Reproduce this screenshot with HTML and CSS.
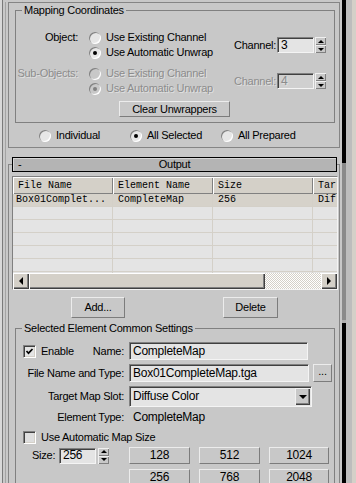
FILE: index.html
```html
<!DOCTYPE html>
<html lang="en">

<head>
    <meta charset="UTF-8">
    <title>Render To Texture</title>
    <link rel="stylesheet" href="styles.css">
</head>

<body>
    <div class="window">
        <div class="edge"></div>
        <div class="panel">
            <div class="panel-inner">

                <!-- Mapping Coordinates rollout -->
                <div class="rollout">
                    <fieldset class="group">
                        <legend>Mapping Coordinates</legend>
                        <div class="coord-block">
                            <div class="coord-label">Object:</div>
                            <div class="radio-stack">
                                <div class="opt"><span class="radio"></span>Use Existing Channel</div>
                                <div class="opt"><span class="radio on"></span>Use Automatic Unwrap</div>
                            </div>
                            <div class="channel">
                                <span class="channel-label">Channel:</span>
                                <span class="field num">3</span>
                                <span class="spinner"><span class="spin-up"></span><span class="spin-down"></span></span>
                            </div>
                        </div>
                        <div class="coord-block disabled">
                            <div class="coord-label">Sub-Objects:</div>
                            <div class="radio-stack">
                                <div class="opt"><span class="radio"></span>Use Existing Channel</div>
                                <div class="opt"><span class="radio on"></span>Use Automatic Unwrap</div>
                            </div>
                            <div class="channel">
                                <span class="channel-label">Channel:</span>
                                <span class="field num">4</span>
                                <span class="spinner"><span class="spin-up"></span><span class="spin-down"></span></span>
                            </div>
                        </div>
                        <div class="btn clear-btn">Clear Unwrappers</div>
                    </fieldset>
                    <div class="scope-row">
                        <div class="opt scope"><span class="radio"></span>Individual</div>
                        <div class="opt scope"><span class="radio on"></span>All Selected</div>
                        <div class="opt scope"><span class="radio"></span>All Prepared</div>
                    </div>
                </div>

                <!-- Output rollout -->
                <div class="rollout output">
                    <div class="rollout-head">
                        <span class="head-sign">-</span>
                        <span class="head-title">Output</span>
                        <span></span>
                    </div>

                    <div class="list">
                        <div class="list-head">
                            <div class="col-head">File Name</div>
                            <div class="col-head">Element Name</div>
                            <div class="col-head">Size</div>
                            <div class="col-head">Tar</div>
                        </div>
                        <div class="list-body">
                            <div class="list-row current">
                                <div class="cell first">Box01Complet...</div>
                                <div class="cell">CompleteMap</div>
                                <div class="cell">256</div>
                                <div class="cell">Dif</div>
                            </div>
                            <div class="list-row"><div class="cell"></div><div class="cell"></div><div class="cell"></div><div class="cell"></div></div>
                            <div class="list-row"><div class="cell"></div><div class="cell"></div><div class="cell"></div><div class="cell"></div></div>
                            <div class="list-row"><div class="cell"></div><div class="cell"></div><div class="cell"></div><div class="cell"></div></div>
                            <div class="list-row"><div class="cell"></div><div class="cell"></div><div class="cell"></div><div class="cell"></div></div>
                            <div class="list-row"><div class="cell"></div><div class="cell"></div><div class="cell"></div><div class="cell"></div></div>
                            <div class="list-row"><div class="cell"></div><div class="cell"></div><div class="cell"></div><div class="cell"></div></div>
                        </div>
                        <div class="hscroll">
                            <div class="arrow-btn"><span class="tri-left"></span></div>
                            <div class="hthumb"></div>
                            <div class="htrack"></div>
                            <div class="arrow-btn"><span class="tri-right"></span></div>
                        </div>
                    </div>

                    <div class="list-actions">
                        <div class="btn add-btn">Add...</div>
                        <div class="btn delete-btn">Delete</div>
                    </div>

                    <fieldset class="group settings">
                        <legend>Selected Element Common Settings</legend>
                        <div class="set-row">
                            <div class="set-label enable-cell">
                                <span class="check-line">
                                    <span class="checkbox">
                                        <svg width="9" height="9" viewBox="0 0 9 9"><polyline points="1.5,4 3.5,6.2 7.5,2" fill="none" stroke="#000" stroke-width="1.7"/></svg>
                                    </span>Enable
                                </span>
                                <span>Name:</span>
                            </div>
                            <div class="field name-field">CompleteMap</div>
                        </div>
                        <div class="set-row">
                            <div class="set-label">File Name and Type:</div>
                            <div class="field file-field">Box01CompleteMap.tga</div>
                            <div class="btn browse-btn">...</div>
                        </div>
                        <div class="set-row">
                            <div class="set-label">Target Map Slot:</div>
                            <div class="field dropdown">Diffuse Color<span class="drop-btn"><span class="tri-down"></span></span></div>
                        </div>
                        <div class="set-row element-row">
                            <div class="set-label">Element Type:</div>
                            <div class="set-value">CompleteMap</div>
                        </div>
                        <div class="auto-row">
                            <span class="checkbox plain"></span>Use Automatic Map Size
                        </div>
                        <div class="size-row">
                            <div class="size-left">
                                <span class="size-label">Size:</span>
                                <span class="field num size-field">256</span>
                                <span class="spinner"><span class="spin-up"></span><span class="spin-down"></span></span>
                            </div>
                            <div class="size-grid">
                                <div class="btn">128</div>
                                <div class="btn">512</div>
                                <div class="btn">1024</div>
                                <div class="btn">256</div>
                                <div class="btn">768</div>
                                <div class="btn">2048</div>
                            </div>
                        </div>
                    </fieldset>
                </div>

            </div>
        </div>
        <div class="vscroll">
            <div class="vs-top"></div>
            <div class="vs-thumb"></div>
            <div class="vs-bottom"></div>
        </div>
        <div class="gutter"></div>
        <div class="edge-right"></div>
    </div>
</body>

</html>
```

FILE: styles.css
```css
* {
    box-sizing: border-box;
}

body {
    margin: 0;
    background-color: #c8c8c8;
    font-family: "Liberation Sans", Arial, sans-serif;
    font-size: 11px;
    line-height: 13px;
    letter-spacing: -0.25px;
    color: #000;
    overflow: hidden;
}

.window {
    display: flex;
    width: 356px;
    height: 483px;
    overflow: hidden;
}

.edge {
    width: 2px;
    background-color: #d8d8d8;
}

.panel {
    width: 340px;
    border-left: 1px solid #7a7a7a;
    padding-top: 2px;
}

.panel-inner {
    margin-left: 2px;
    height: 100%;
    padding-left: 2px;
    border-left: 1px solid #a4a4a4;
}

.rollout {
    width: 332px;
    border: 1px solid #858585;
    padding-bottom: 5px;
}

/* group boxes */
.group {
    margin: 1px 4px 0 6px;
    padding: 13px 0 5px 0;
    border: 1px solid #808080;
    min-width: 0;
}

.group legend {
    margin-left: 6px;
    padding: 0 2px;
    line-height: 13px;
}

/* mapping coordinates */
.coord-block {
    display: flex;
    align-items: center;
}

.coord-block + .coord-block {
    margin-top: 6px;
}

.coord-label {
    align-self: flex-start;
    width: 62px;
    line-height: 15px;
    text-align: right;
    white-space: nowrap;
}

.radio-stack {
    width: 145px;
    margin-left: 11px;
    display: flex;
    flex-direction: column;
}

.opt {
    display: flex;
    align-items: center;
    height: 15px;
    white-space: nowrap;
}

.radio {
    width: 12px;
    height: 12px;
    margin-right: 5px;
    border-radius: 50%;
    background-color: #e6e6e6;
    box-shadow: inset 1px 1px 0 #808080, inset -1px -1px 0 #fff;
    display: flex;
    align-items: center;
    justify-content: center;
    flex: none;
}

.radio.on::after {
    content: "";
    width: 4px;
    height: 4px;
    border-radius: 50%;
    background-color: #000;
}

.disabled {
    color: #8c8c8c;
    text-shadow: 1px 1px 0 #e0e0e0;
}

.disabled .radio {
    background-color: #c8c8c8;
}

.disabled .radio.on::after {
    background-color: #808080;
}

.channel {
    display: flex;
    align-items: center;
}

.channel-label {
    width: 42px;
    margin-right: 1px;
    text-align: right;
    white-space: nowrap;
}

.field {
    display: flex;
    align-items: center;
    padding-left: 3px;
    background-color: #e4e4e4;
    border: 1px solid;
    border-color: #808080 #f4f4f4 #f4f4f4 #808080;
    box-shadow: inset 1px 1px 0 #404040;
    white-space: nowrap;
    overflow: hidden;
}

.num {
    width: 37px;
    height: 16px;
    font-size: 12px;
}

.disabled .field {
    background-color: #d0d0d0;
}

.spinner {
    width: 11px;
    height: 16px;
    margin-left: 1px;
    display: flex;
    flex-direction: column;
}

.spin-up,
.spin-down {
    flex: 1;
    background-color: #c8c8c8;
    box-shadow: inset 1px 1px 0 #f0f0f0, inset -1px -1px 0 #808080;
    display: flex;
    align-items: center;
    justify-content: center;
}

.spin-up::after {
    content: "";
    border-left: 3px solid transparent;
    border-right: 3px solid transparent;
    border-bottom: 3px solid #000;
}

.spin-down::after {
    content: "";
    border-left: 3px solid transparent;
    border-right: 3px solid transparent;
    border-top: 3px solid #000;
}

/* buttons */
.btn {
    display: flex;
    align-items: center;
    justify-content: center;
    background-color: #c8c8c8;
    border: 1px solid;
    border-color: #ececec #7c7c7c #7c7c7c #ececec;
    white-space: nowrap;
}

.clear-btn {
    width: 111px;
    height: 16px;
    margin: 5px 0 0 103px;
}

.scope-row {
    display: flex;
    margin-top: 6px;
    padding-left: 30px;
}

.scope {
    width: 91px;
    height: 13px;
}

/* output rollout */
.output {
    margin-top: 16px;
    height: 330px;
    border-bottom: none;
}

.rollout-head {
    display: grid;
    grid-template-columns: 20px 1fr 20px;
    align-items: center;
    height: 15px;
    margin: -8px 2px 0 3px;
    border: 1px solid #000;
    background-color: #b4b4b4;
    box-shadow: inset 1px 1px 0 #d6d6d6;
}

.head-sign {
    padding-left: 5px;
}

.head-title {
    text-align: center;
}

/* list view */
.list {
    height: 114px;
    margin: 4px 1px 0 3px;
    border: 1px solid;
    border-color: #808080 #f4f4f4 #f4f4f4 #808080;
    background-color: #e4e4e4;
    font-family: "Liberation Mono", "Courier New", monospace;
    font-size: 10px;
    letter-spacing: 0;
    overflow: hidden;
}

.list-head,
.list-row {
    display: grid;
    grid-template-columns: 100px 100px 100px 100px;
}

.col-head {
    height: 17px;
    line-height: 17px;
    padding-left: 5px;
    background-color: #d4d0c8;
    box-shadow: inset 1px 1px 0 #fff, inset -1px -1px 0 #808080;
    white-space: nowrap;
    overflow: hidden;
}

.list-body {
    height: 79px;
    overflow: hidden;
}

.cell {
    height: 13px;
    line-height: 12px;
    padding-left: 5px;
    border-right: 1px solid #d4d0c8;
    border-bottom: 1px solid #d4d0c8;
    white-space: nowrap;
    overflow: hidden;
}

.cell.first {
    padding-left: 3px;
}

.list-row.current {
    background-color: #d6d2ca;
}

.hscroll {
    display: flex;
    height: 16px;
}

.arrow-btn {
    width: 16px;
    flex: none;
    background-color: #d4d0c8;
    box-shadow: inset 1px 1px 0 #fff, inset -1px -1px 0 #404040, inset -2px -2px 0 #808080;
    display: flex;
    align-items: center;
    justify-content: center;
}

.tri-left {
    border-top: 4px solid transparent;
    border-bottom: 4px solid transparent;
    border-right: 4px solid #000;
}

.tri-right {
    border-top: 4px solid transparent;
    border-bottom: 4px solid transparent;
    border-left: 4px solid #000;
}

.hthumb {
    width: 236px;
    flex: none;
    background-color: #d4d0c8;
    box-shadow: inset 1px 1px 0 #fff, inset -1px -1px 0 #404040, inset -2px -2px 0 #808080;
}

.htrack {
    flex: 1;
    background: repeating-conic-gradient(#fff 0 25%, #d4d0c8 0 50%) 0 0 / 2px 2px;
}

.list-actions {
    display: flex;
    margin-top: 7px;
    padding-left: 62px;
}

.add-btn {
    width: 54px;
    height: 21px;
}

.delete-btn {
    width: 55px;
    height: 21px;
    margin-left: 98px;
}

/* selected element settings */
.settings {
    margin-top: 4px;
    padding-top: 7px;
    border-bottom: none;
}

.set-row {
    display: flex;
    align-items: center;
}

.set-row + .set-row {
    margin-top: 4px;
}

.set-label {
    width: 108px;
    margin-right: 5px;
    text-align: right;
    white-space: nowrap;
}

.enable-cell {
    display: flex;
    justify-content: space-between;
    padding-left: 7px;
}

.check-line {
    display: flex;
    align-items: center;
}

.checkbox {
    width: 13px;
    height: 13px;
    margin-right: 5px;
    display: flex;
    align-items: center;
    justify-content: center;
    background-color: #e4e4e4;
    border: 1px solid;
    border-color: #808080 #fff #fff #808080;
    box-shadow: inset 1px 1px 0 #404040, inset -1px -1px 0 #d4d0c8;
    flex: none;
}

.checkbox.plain {
    background-color: #dedede;
}

.name-field {
    width: 179px;
    height: 18px;
    font-size: 12px;
}

.file-field {
    width: 180px;
    height: 18px;
    font-size: 12px;
}

.browse-btn {
    width: 19px;
    height: 18px;
    margin-left: 4px;
    align-items: flex-end;
    padding-bottom: 3px;
}

.dropdown {
    width: 183px;
    height: 21px;
    justify-content: space-between;
    font-size: 12px;
}

.drop-btn {
    width: 15px;
    height: 17px;
    margin-right: 1px;
    background-color: #c8c8c8;
    box-shadow: inset 1px 1px 0 #f0f0f0, inset -1px -1px 0 #404040, inset -2px -2px 0 #808080;
    display: flex;
    align-items: center;
    justify-content: center;
}

.tri-down {
    border-left: 4px solid transparent;
    border-right: 4px solid transparent;
    border-top: 4px solid #000;
}

.element-row {
    height: 13px;
}

.set-value {
    padding-left: 4px;
    font-size: 12px;
}

.auto-row {
    display: flex;
    align-items: center;
    height: 13px;
    margin-top: 7px;
    padding-left: 7px;
}

.size-row {
    display: flex;
    align-items: flex-start;
    margin-top: 3px;
}

.size-left {
    display: flex;
    align-items: center;
    height: 17px;
    padding-left: 16px;
}

.size-label {
    width: 27px;
}

.size-field {
    width: 37px;
}

.size-left .spinner {
    margin-left: 2px;
}

.size-grid {
    display: grid;
    grid-template-columns: 61px 61px 60px;
    grid-auto-rows: 17px;
    column-gap: 9px;
    row-gap: 5px;
    margin-left: 20px;
    font-size: 12px;
}

/* right side scroll strip */
.vscroll {
    width: 4px;
    display: flex;
    flex-direction: column;
}

.vs-top {
    height: 163px;
    background-color: #000;
}

.vs-thumb {
    height: 160px;
    background-color: #8a8a8a;
    border-bottom: 3px solid #b0b0b0;
}

.vs-bottom {
    flex: 1;
    background-color: #000;
}

.gutter {
    width: 6px;
    background-color: #bdbdbd;
}

.edge-right {
    width: 4px;
    background-color: #d4d0c8;
}
```
